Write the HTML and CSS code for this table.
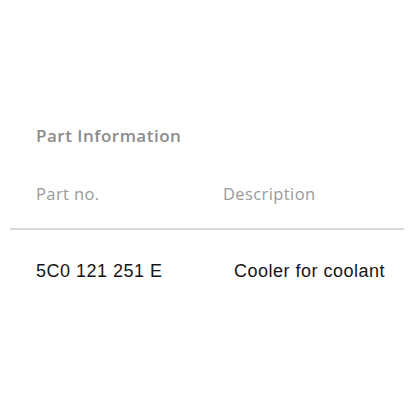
FILE: index.html
```html
<!DOCTYPE html>
<html>
<head>
<meta charset="utf-8">
<link rel="stylesheet" href="styles.css">
</head>
<body>
<div class="panel">
  <h2 class="title">Part Information</h2>
  <div class="head-row">
    <div class="col-a">Part no.</div>
    <div class="col-b">Description</div>
  </div>
  <div class="divider"></div>
  <div class="data-row">
    <div class="col-a">5C0 121 251 E</div>
    <div class="col-c">Cooler for coolant</div>
  </div>
</div>
</body>
</html>
```
FILE: styles.css
```css
html, body {
  margin: 0;
  padding: 0;
  background: #ffffff;
}
.panel {
  padding: 126px 10px 0 10px;
}
.title {
  margin: 0 0 0 26px;
  font-family: "Open Sans", sans-serif;
  font-weight: 600;
  font-size: 17px;
  letter-spacing: 0.5px;
  line-height: 20px;
  color: #8c8c8c;
}
.head-row {
  display: flex;
  margin-top: 38px;
  padding-left: 26px;
  font-family: "Open Sans", sans-serif;
  font-size: 16.5px;
  letter-spacing: 0.4px;
  line-height: 20px;
  color: #9a9a9a;
}
.head-row .col-a {
  width: 187px;
}
.divider {
  margin-top: 24px;
  height: 2px;
  background: #d9d9d9;
  width: 394px;
}
.data-row {
  display: flex;
  margin-top: 31px;
  padding-left: 26px;
  font-family: "Liberation Sans", Arial, sans-serif;
  font-size: 18px;
  letter-spacing: 0.5px;
  line-height: 20px;
  color: #151515;
}
.data-row .col-a {
  width: 198px;
}
```
